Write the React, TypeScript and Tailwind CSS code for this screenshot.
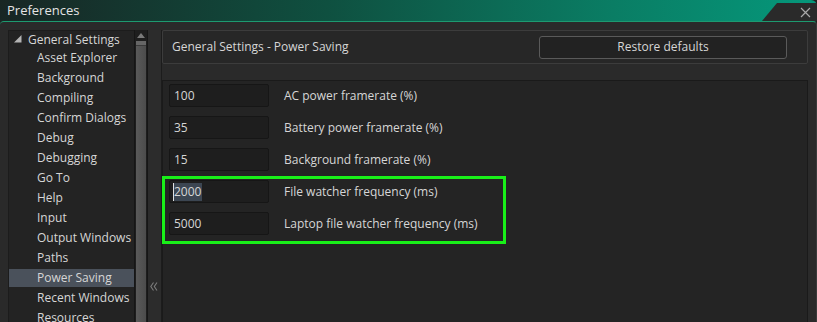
import React from "react";

const children = [
  "Asset Explorer",
  "Background",
  "Compiling",
  "Confirm Dialogs",
  "Debug",
  "Debugging",
  "Go To",
  "Help",
  "Input",
  "Output Windows",
  "Paths",
  "Power Saving",
  "Recent Windows",
  "Resources",
];

const rows = [
  { v: "100", l: "AC power framerate (%)" },
  { v: "35", l: "Battery power framerate (%)" },
  { v: "15", l: "Background framerate (%)" },
  { v: "2000", l: "File watcher frequency (ms)", sel: true },
  { v: "5000", l: "Laptop file watcher frequency (ms)" },
];

export default function App() {
  return (
    <div
      className="w-[817px] h-[322px] overflow-hidden bg-[#202020] text-[12px] text-[#d6d6d6] flex flex-col"
      style={{ fontFamily: '"Open Sans", "Noto Sans", sans-serif' }}
    >
      {/* Title bar */}
      <div className="relative h-[21px] shrink-0 bg-[linear-gradient(90deg,#182624_0%,#0f5040_40%,#0a7d64_75%,#05987b_100%)] rounded-tr-[6px]">
        <div className="pl-[7px] leading-[21px] text-[13px] text-[#e4e4e4]">Preferences</div>
        <div className="absolute right-0 top-[3px] h-[18px] w-[55px] bg-[#2a2a2a] [clip-path:polygon(15px_0,100%_0,100%_100%,0_100%)] flex items-center justify-end pr-[6px]">
          <svg width="11" height="11" viewBox="0 0 11 11">
            <path d="M1 1 L10 10 M10 1 L1 10" stroke="#a8a8a8" strokeWidth="1.2" fill="none" />
          </svg>
        </div>
      </div>

      {/* Body */}
      <div className="flex flex-1 min-h-0 bg-[#2a2a2a] rounded-t-[4px] border-t border-[#1d9a70] pt-[8px] pl-[8px] pr-[8px] border-r border-r-[#3a3a3a]">
        {/* Tree */}
        <div className="w-[126px] shrink-0 bg-[#232323] border-l border-t border-[#1c1c1c] flex flex-col">
          <div className="h-[17px] flex items-center shrink-0">
            <svg width="8" height="8" viewBox="0 0 8 8" className="ml-[5px] mt-[-1px]">
              <polygon points="0,7.5 7.5,7.5 7.5,0" fill="#b4b4b4" />
            </svg>
            <span className="ml-[6px] leading-none">General Settings</span>
          </div>
          {children.map((c) => (
            <div key={c} className="h-[20px] shrink-0 py-[1px]">
              <div
                className={
                  "h-[18px] flex items-center pl-[28px] whitespace-nowrap " +
                  (c === "Power Saving" ? "bg-[#4a515b]" : "")
                }
              >
                {c}
              </div>
            </div>
          ))}
        </div>

        {/* Scrollbar */}
        <div className="w-[14px] shrink-0 bg-[#1e1e1e] border-l border-r border-[#161616] flex flex-col items-center">
          <svg width="8" height="6" viewBox="0 0 8 6" className="mt-[3px]">
            <polygon points="4,0 8,5 0,5" fill="#7a7a7a" />
          </svg>
          <div className="mt-[2px] w-[10px] flex-1 bg-[linear-gradient(90deg,#5a5a5a,#4c4c4c)] flex flex-col">
            <div className="h-[4px] bg-[#666]" />
            <div className="h-px bg-[#3a3a3a]" />
          </div>
        </div>

        {/* Splitter */}
        <div className="w-[14px] shrink-0 bg-[#2c2c2c] border-r border-[#1c1c1c] flex flex-col">
          <div className="h-[252px]" />
          <svg width="8" height="9" viewBox="0 0 8 9" className="ml-[2px]">
            <path d="M3.5 0.5 L0.8 4.5 L3.5 8.5 M7 0.5 L4.3 4.5 L7 8.5" stroke="#7c7c7c" strokeWidth="1.1" fill="none" />
          </svg>
        </div>

        {/* Right */}
        <div className="flex-1 min-w-0 flex flex-col">
          <div className="h-[34px] shrink-0 border border-[#3c3c3c] rounded-[2px] bg-[#272727] flex items-center justify-between pl-[9px] pr-[20px]">
            <span>General Settings - Power Saving</span>
            <div className="w-[248px] h-[23px] border border-[#5a5a5a] rounded-[3px] bg-[#222222] flex items-center justify-center">
              Restore defaults
            </div>
          </div>
          <div className="relative mt-[16px] flex-1 bg-[#242424] border-l border-t border-r border-[#1a1a1a] pl-[6px] pt-[3px] flex flex-col gap-[9px]">
            {rows.map((r) => (
              <div key={r.v} className="flex items-center">
                <div className="w-[100px] h-[23px] bg-[#1e1e1e] border border-[#161616] rounded-[2px] flex items-center pl-[3px]">
                  {r.sel ? (
                    <span className="relative bg-[#3c4652] px-[1px]">
                      <span className="absolute left-0 top-0 bottom-0 w-px bg-[#e0e0e0]" />
                      {r.v}
                    </span>
                  ) : (
                    <span className="pl-[1px]">{r.v}</span>
                  )}
                </div>
                <span className="ml-[15px]">{r.l}</span>
              </div>
            ))}
            <div className="absolute left-[-1px] top-[95px] w-[344px] h-[68px] border-[3px] border-[#19f019]" />
          </div>
        </div>
      </div>
    </div>
  );
}
